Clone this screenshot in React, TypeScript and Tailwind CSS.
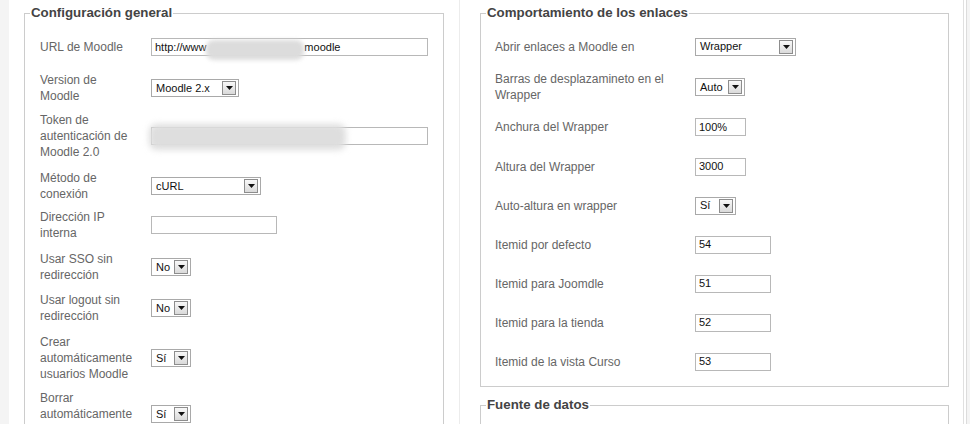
import React from "react"

type Ctl =
  | { kind: "input"; value: string; w: string; blur?: "url" | "token" }
  | { kind: "select"; value: string; w: string }

interface Row {
  label: string
  ctl: Ctl
  mt: string
}

const leftRows: Row[] = [
  { label: "URL de Moodle", ctl: { kind: "input", value: "", w: "w-[277px]", blur: "url" }, mt: "mt-[17px]" },
  { label: "Version de Moodle", ctl: { kind: "select", value: "Moodle 2.x", w: "w-[88px]" }, mt: "mt-[16px]" },
  { label: "Token de autenticación de Moodle 2.0", ctl: { kind: "input", value: "", w: "w-[277px]", blur: "token" }, mt: "mt-[8px]" },
  { label: "Método de conexión", ctl: { kind: "select", value: "cURL", w: "w-[110px]" }, mt: "mt-[10px]" },
  { label: "Dirección IP interna", ctl: { kind: "input", value: "", w: "w-[126px]" }, mt: "mt-[7px]" },
  { label: "Usar SSO sin redirección", ctl: { kind: "select", value: "No", w: "w-[40px]" }, mt: "mt-[10px]" },
  { label: "Usar logout sin redirección", ctl: { kind: "select", value: "No", w: "w-[40px]" }, mt: "mt-[9px]" },
  { label: "Crear automáticamente usuarios Moodle", ctl: { kind: "select", value: "Sí", w: "w-[40px]" }, mt: "mt-[10px]" },
  { label: "Borrar automáticamente usuarios Moodle", ctl: { kind: "select", value: "Sí", w: "w-[40px]" }, mt: "mt-[8px]" },
]

const rightRows: { label: string; ctl: Ctl; h: string }[] = [
  { label: "Abrir enlaces a Moodle en", ctl: { kind: "select", value: "Wrapper", w: "w-[101px]" }, h: "h-[41px]" },
  { label: "Barras de desplazamineto en el Wrapper", ctl: { kind: "select", value: "Auto", w: "w-[50px]" }, h: "h-[40px]" },
  { label: "Anchura del Wrapper", ctl: { kind: "input", value: "100%", w: "w-[51px]" }, h: "h-[40px]" },
  { label: "Altura del Wrapper", ctl: { kind: "input", value: "3000", w: "w-[51px]" }, h: "h-[39px]" },
  { label: "Auto-altura en wrapper", ctl: { kind: "select", value: "Sí", w: "w-[41px]" }, h: "h-[39px]" },
  { label: "Itemid por defecto", ctl: { kind: "input", value: "54", w: "w-[76px]" }, h: "h-[39px]" },
  { label: "Itemid para Joomdle", ctl: { kind: "input", value: "51", w: "w-[76px]" }, h: "h-[39px]" },
  { label: "Itemid para la tienda", ctl: { kind: "input", value: "52", w: "w-[76px]" }, h: "h-[39px]" },
  { label: "Itemid de la vista Curso", ctl: { kind: "input", value: "53", w: "w-[76px]" }, h: "h-[39px]" },
]

function Control({ ctl }: { ctl: Ctl }) {
  if (ctl.kind === "select") {
    return (
      <div
        className={`flex h-[18px] shrink-0 items-center justify-between border border-[#a9a9a9] bg-white pl-[4px] pr-[2px] text-[11px] text-[#111] ${ctl.w}`}
      >
        <span>{ctl.value}</span>
        <span className="flex h-[14px] w-[14px] items-center justify-center border border-[#8d8d8d] bg-gradient-to-b from-[#f8f8f8] to-[#dadada]">
          <svg width="7" height="4" viewBox="0 0 7 4">
            <path d="M0 0h7L3.5 4z" fill="#111" />
          </svg>
        </span>
      </div>
    )
  }
  return (
    <div
      className={`relative flex h-[18px] shrink-0 items-center border border-[#b8b8b8] bg-white pl-[3px] text-[11px] text-[#111] ${ctl.w}`}
    >
      {ctl.blur === "url" ? (
        <>
          <span>http://www</span>
          <span className="w-[98px]" />
          <span>moodle</span>
          <div className="absolute left-[54px] top-[1px] h-[20px] w-[98px] rounded-[8px] bg-[#dcdcdc] blur-[2px]" />
        </>
      ) : ctl.blur === "token" ? (
        <div className="absolute left-[-3px] top-[-4px] h-[26px] w-[197px] rounded-[8px] bg-[#dedede] blur-[3px]" />
      ) : (
        ctl.value
      )}
    </div>
  )
}

function Legend({ children }: { children: React.ReactNode }) {
  return (
    <legend className="ml-[5px] px-[1px] text-[13.3px] font-bold leading-[16px] text-[#444]">{children}</legend>
  )
}

export default function App() {
  return (
    <div className="flex h-[424px] w-[970px] overflow-hidden bg-white font-['Liberation_Sans',Arial,sans-serif]">
      <div className="w-[9px] shrink-0 bg-[#f4f4f4]" />

      <div className="w-[450px] shrink-0 pl-[15px] pt-[5px]">
        <fieldset className="w-[420px] border border-[#cccccc] pb-[20px]">
          <Legend>Configuración general</Legend>
          {leftRows.map((row) => (
            <div key={row.label} className={`flex items-center gap-[13px] pl-[15px] ${row.mt}`}>
              <div className="w-[98px] shrink-0 text-[12px] leading-[16px] text-[#666]">{row.label}</div>
              <Control ctl={row.ctl} />
            </div>
          ))}
        </fieldset>
      </div>

      <div className="w-px shrink-0 bg-[#ececec]" />

      <div className="w-[503px] shrink-0 pl-[20px] pt-[5px]">
        <fieldset className="w-[469px] border border-[#cccccc] pb-[5px]">
          <Legend>Comportamiento de los enlaces</Legend>
          <div className="pt-[5px]">
            {rightRows.map((row) => (
              <div key={row.label} className={`flex items-center pl-[14px] ${row.h}`}>
                <div className="w-[200px] shrink-0 pr-[10px] text-[12px] leading-[16px] text-[#666]">{row.label}</div>
                <Control ctl={row.ctl} />
              </div>
            ))}
          </div>
        </fieldset>

        <fieldset className="mt-[10px] h-[60px] w-[469px] border border-[#cccccc]">
          <Legend>Fuente de datos</Legend>
        </fieldset>
      </div>

      <div className="w-px shrink-0 bg-[#e0e0e0]" />
      <div className="w-[2px] shrink-0 bg-white" />
      <div className="w-px shrink-0 bg-[#dcdcdc]" />
      <div className="flex-1 bg-[#f4f4f4]" />
    </div>
  )
}
